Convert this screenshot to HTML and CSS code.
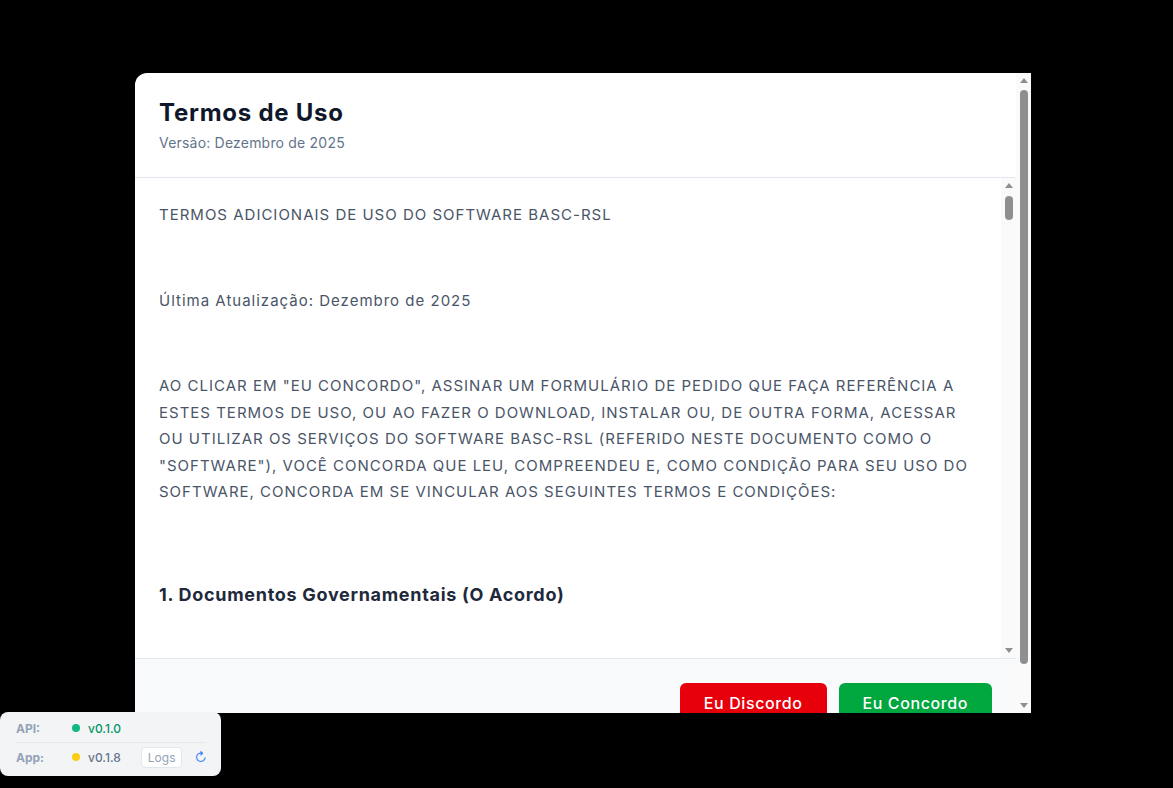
FILE: index.html
```html
<!DOCTYPE html>
<html lang="pt-BR">
<head>
  <meta charset="UTF-8" />
  <meta name="viewport" content="width=device-width, initial-scale=1.0" />
  <title>Termos de Uso - BASC-RSL</title>
  <link rel="stylesheet" href="styles.css">
</head>
<body>
  <div class="overlay">
    <div class="dialog-scroll">
      <div class="modal">
        <div class="modal-header">
          <h1>Termos de Uso</h1>
          <p class="version">Versão: Dezembro de 2025</p>
        </div>

        <div class="terms-wrap">
          <div class="terms">
            <p>TERMOS ADICIONAIS DE USO DO SOFTWARE BASC-RSL</p>
            <p>Última Atualização: Dezembro de 2025</p>
            <p>AO CLICAR EM "EU CONCORDO", ASSINAR UM FORMULÁRIO DE PEDIDO QUE FAÇA REFERÊNCIA A ESTES TERMOS DE USO, OU AO FAZER O DOWNLOAD, INSTALAR OU, DE OUTRA FORMA, ACESSAR OU UTILIZAR OS SERVIÇOS DO SOFTWARE BASC-RSL (REFERIDO NESTE DOCUMENTO COMO O "SOFTWARE"), VOCÊ CONCORDA QUE LEU, COMPREENDEU E, COMO CONDIÇÃO PARA SEU USO DO SOFTWARE, CONCORDA EM SE VINCULAR AOS SEGUINTES TERMOS E CONDIÇÕES:</p>

            <h3>1. Documentos Governamentais (O Acordo)</h3>
            <p>Estes Termos de Uso, juntamente com qualquer Formulário de Pedido, a Política de Privacidade e demais documentos expressamente incorporados por referência, constituem o acordo integral entre você e o licenciante com relação ao Software.</p>
            <p>Em caso de conflito entre os documentos, prevalecerá a seguinte ordem: (i) o Formulário de Pedido; (ii) estes Termos de Uso; (iii) a Política de Privacidade.</p>

            <h3>2. Licença de Uso</h3>
            <p>Sujeito ao cumprimento destes Termos, concedemos a você uma licença limitada, não exclusiva, intransferível e revogável para instalar e utilizar o Software exclusivamente para fins internos da sua organização.</p>

            <h3>3. Restrições</h3>
            <p>Você não poderá copiar, modificar, distribuir, vender, sublicenciar, realizar engenharia reversa, descompilar ou tentar obter o código-fonte do Software, exceto quando expressamente permitido pela legislação aplicável.</p>
          </div>
          <div class="scrollbar">
            <span class="sb-arrow up"></span>
            <div class="sb-track"><span class="sb-thumb thumb-terms"></span></div>
            <span class="sb-arrow down"></span>
          </div>
        </div>

        <div class="modal-footer">
          <button class="btn btn-decline">Eu Discordo</button>
          <button class="btn btn-accept">Eu Concordo</button>
        </div>
      </div>

      <div class="scrollbar">
        <span class="sb-arrow up"></span>
        <div class="sb-track"><span class="sb-thumb thumb-page"></span></div>
        <span class="sb-arrow down"></span>
      </div>
    </div>
  </div>

  <div class="status">
    <div class="status-row">
      <span class="status-label">API:</span>
      <span class="dot dot-ok"></span>
      <span class="status-version ok">v0.1.0</span>
    </div>
    <div class="status-row">
      <span class="status-label">App:</span>
      <span class="dot dot-warn"></span>
      <span class="status-version">v0.1.8</span>
      <button class="logs-btn">Logs</button>
      <span class="refresh">↻</span>
    </div>
  </div>
</body>
</html>
```

FILE: styles.css
```css
html, body {
  margin: 0;
  height: 100%;
}
body {
  background: #000;
  font-family: Inter, "Noto Sans", sans-serif;
  overflow: hidden;
}
.overlay {
  padding: 73px 0 0 135px;
}
.dialog-scroll {
  display: flex;
  align-items: flex-start;
  width: 896px;
  height: 640px;
  overflow: hidden;
}
.modal {
  flex: 1;
  background: white;
  border-radius: 12px 0 0 0;
}
.modal-header {
  padding: 24px 24px 24px;
  border-bottom: 1px solid #e2e8f0;
}
.modal-header h1 {
  margin: 0;
  font-size: 24px;
  line-height: 32px;
  font-weight: 700;
  letter-spacing: 0.75px;
  color: #0f172a;
}
.version {
  margin: 4px 0 0;
  font-size: 14px;
  line-height: 20px;
  letter-spacing: 0.2px;
  color: #64748b;
}

/* terms body with its own scroll track */
.terms-wrap {
  display: flex;
  height: 480px;
}
.terms {
  flex: 1;
  overflow: hidden;
  padding: 24px;
  color: #4a5568;
  font-size: 15px;
  line-height: 26.5px;
  letter-spacing: 1px;
}
.terms p {
  margin: 0 0 59px;
}
.terms h3 {
  margin: 75px 0 59px;
  font-size: 18px;
  line-height: 28px;
  font-weight: 700;
  letter-spacing: 0.7px;
  color: #1e293b;
}

.modal-footer {
  display: flex;
  justify-content: flex-end;
  gap: 12px;
  padding: 24px;
  background: #f8fafc;
  border-top: 1px solid #e2e8f0;
}
.btn {
  border: none;
  border-radius: 6px;
  padding: 8px 24px;
  font-family: inherit;
  font-size: 16px;
  line-height: 24px;
  font-weight: 500;
  letter-spacing: 0.6px;
  color: white;
  cursor: pointer;
}
.btn-decline {
  background: #e7000b;
}
.btn-accept {
  background: #00a63e;
}

/* scrollbars */
.scrollbar {
  align-self: stretch;
  width: 15px;
  display: flex;
  flex-direction: column;
  background: #fafafa;
}
.sb-arrow {
  height: 15px;
  display: flex;
  align-items: center;
  justify-content: center;
}
.sb-arrow::before {
  content: "";
  border-left: 4.5px solid transparent;
  border-right: 4.5px solid transparent;
}
.sb-arrow.up::before {
  border-bottom: 5px solid #8f8f8f;
}
.sb-arrow.down::before {
  border-top: 5px solid #8f8f8f;
}
.sb-track {
  flex: 1;
  display: flex;
  flex-direction: column;
  align-items: center;
}
.sb-thumb {
  width: 8px;
  border-radius: 4px;
  background: #8f8f8f;
}
.thumb-terms {
  margin-top: 3px;
  height: 24px;
}
.thumb-page {
  margin-top: 2px;
  height: 574px;
}

/* bottom-left build status */
.status {
  position: fixed;
  left: 0;
  bottom: 12px;
  width: 189px;
  padding: 2px 16px 5px;
  background: #f3f4f6;
  border-radius: 8px;
  font-size: 12px;
}
.status-row {
  display: flex;
  align-items: center;
  height: 28px;
}
.status-row + .status-row {
  border-top: 1px solid #e5e7eb;
}
.status-label {
  flex-shrink: 0;
  width: 56px;
  font-weight: 700;
  color: #94a3b8;
}
.dot {
  flex-shrink: 0;
  width: 8px;
  height: 8px;
  border-radius: 50%;
  margin-right: 8px;
}
.dot-ok {
  background: #10b981;
}
.dot-warn {
  background: #facc15;
}
.status-version {
  font-weight: 500;
  color: #64748b;
}
.status-version.ok {
  color: #059669;
}
.logs-btn {
  margin-left: 20px;
  padding: 2px 6px;
  background: white;
  border: 1px solid #e2e8f0;
  border-radius: 4px;
  font-family: inherit;
  font-size: 12px;
  color: #94a3b8;
}
.refresh {
  margin-left: 12px;
  color: #3b82f6;
  font-size: 13px;
}
```
